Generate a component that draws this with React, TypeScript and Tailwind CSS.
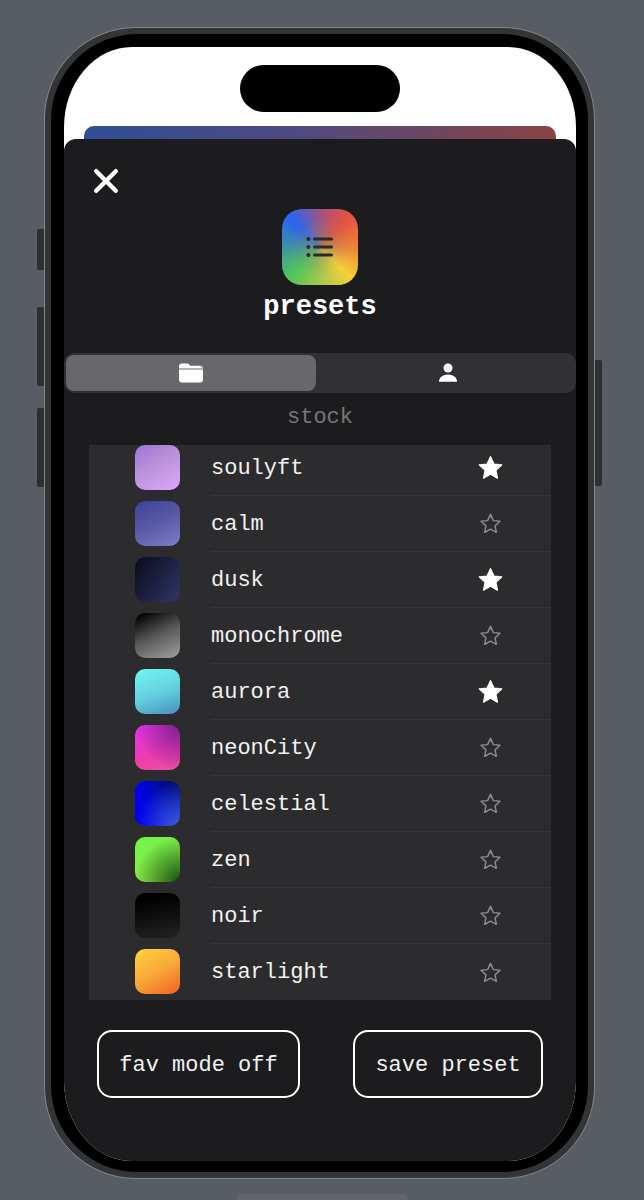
const rows: { name: string; fav: boolean; grad: string }[] = [
  { name: "soulyft", fav: true, grad: "bg-[linear-gradient(150deg,#9f72d6_0%,#b88fd8_40%,#dba9fb_100%)]" },
  { name: "calm", fav: false, grad: "bg-[linear-gradient(155deg,#3f3f98_0%,#5a5aa8_50%,#7e7ec4_100%)]" },
  { name: "dusk", fav: true, grad: "bg-[linear-gradient(125deg,#0b0b1c_0%,#1d2040_50%,#323668_100%)]" },
  { name: "monochrome", fav: false, grad: "bg-[linear-gradient(155deg,#000000_5%,#5a5a5a_50%,#a0a0a0_100%)]" },
  { name: "aurora", fav: true, grad: "bg-[linear-gradient(160deg,#72f6f2_0%,#62cfdc_55%,#4a8dbf_100%)]" },
  { name: "neonCity", fav: false, grad: "bg-[radial-gradient(circle_at_100%_0%,#7c1f8a_0%,#7c1f8a00_70%),linear-gradient(170deg,#e232ee_0%,#ee3ea8_70%,#ea50a8_100%)]" },
  { name: "celestial", fav: false, grad: "bg-[radial-gradient(circle_at_100%_100%,#3d62dc_0%,#3d62dc00_70%),radial-gradient(circle_at_100%_0%,#001260_0%,#00126000_70%),linear-gradient(135deg,#0000f5_0%,#0000d8_100%)]" },
  { name: "zen", fav: false, grad: "bg-[radial-gradient(circle_at_100%_100%,#14500f_0%,#14500f00_72%),linear-gradient(160deg,#70f448_0%,#94e84a_100%)]" },
  { name: "noir", fav: false, grad: "bg-[linear-gradient(170deg,#000000_15%,#232323_100%)]" },
  { name: "starlight", fav: false, grad: "bg-[linear-gradient(150deg,#ffd23f_0%,#f8a83a_50%,#ef6124_100%)]" },
];

const STAR = "12,1.6 15.3,8.7 22.8,9.5 17.2,14.7 18.7,22.2 12,18.5 5.3,22.2 6.8,14.7 1.2,9.5 8.7,8.7";

function Star({ fav }: { fav: boolean }) {
  return fav ? (
    <svg width="25" height="25" viewBox="0 0 24 24">
      <polygon points={STAR} fill="#ffffff" stroke="#ffffff" strokeWidth="1.2" strokeLinejoin="round" />
    </svg>
  ) : (
    <svg width="21" height="21" viewBox="0 0 24 24">
      <polygon points={STAR} fill="none" stroke="#8e8e93" strokeWidth="1.6" strokeLinejoin="round" />
    </svg>
  );
}

export default function App() {
  return (
    <div className="relative h-[1200px] w-[644px] overflow-hidden bg-[#585d64] pl-[44px] pt-[27px] font-['Liberation_Mono','DejaVu_Sans_Mono',monospace]">
      {/* side buttons */}
      <div className="absolute left-[37px] top-[229px] h-[41px] w-[7px] rounded-l-[2px] bg-[#2e2f31]" />
      <div className="absolute left-[37px] top-[307px] h-[79px] w-[7px] rounded-l-[2px] bg-[#2e2f31]" />
      <div className="absolute left-[37px] top-[408px] h-[79px] w-[7px] rounded-l-[2px] bg-[#2e2f31]" />
      <div className="absolute left-[595px] top-[360px] h-[126px] w-[7px] rounded-r-[2px] bg-[#2e2f31]" />
      <div className="absolute left-[236px] top-[1194px] h-[6px] w-[172px] rounded-t-[6px] bg-[#62666c]" />

      {/* phone */}
      <div className="h-[1152px] w-[551px] rounded-[92px] border border-[#85878a] bg-[#333436] p-[6px]">
        <div className="h-full w-full rounded-[86px] bg-black px-[13px] pb-[11px] pt-[13px]">
          <div className="relative flex h-[1114px] w-[512px] flex-col overflow-hidden rounded-[68px/80px] bg-white">
            <div className="absolute left-[176px] top-[18px] h-[47px] w-[160px] rounded-full bg-black" />
            <div className="mx-[20px] mt-[79px] h-[20px] shrink-0 rounded-t-[10px] bg-[linear-gradient(90deg,#2f4e97_0%,#4f4a80_45%,#8a4343_100%)]" />
            <div className="-mt-[7px] flex flex-1 flex-col rounded-t-[12px] bg-[#1c1c1e]">
              <div className="pl-[29px] pt-[29px]">
                <svg width="26" height="26" viewBox="0 0 26 26" className="block">
                  <path d="M3.2 3.2 L22.8 22.8 M22.8 3.2 L3.2 22.8" stroke="#ffffff" strokeWidth="4.4" strokeLinecap="round" />
                </svg>
              </div>
              <div className="mt-[15px] flex flex-col items-center">
                <div className="flex h-[76px] w-[76px] items-center justify-center rounded-[20px] bg-[radial-gradient(circle,#8c8a6c99_0%,#8c8a6c00_55%),conic-gradient(from_-45deg_at_50%_50%,#2b64ee_0%,#a9527a_14%,#e5533f_25%,#ec8638_38%,#f6d038_50%,#a8c84c_62%,#52c45c_75%,#3c90a8_88%,#2b64ee_100%)]">
                  <svg width="28" height="22" viewBox="0 0 28 22">
                    <g fill="#2b2b2b">
                      <circle cx="2.4" cy="3" r="2" />
                      <circle cx="2.4" cy="11" r="2" />
                      <circle cx="2.4" cy="19" r="2" />
                      <rect x="7" y="1.5" width="20" height="3" rx="1.5" />
                      <rect x="7" y="9.5" width="20" height="3" rx="1.5" />
                      <rect x="7" y="17.5" width="20" height="3" rx="1.5" />
                    </g>
                  </svg>
                </div>
                <div className="mt-[3px] text-[27px] font-bold leading-[38px] text-white">presets</div>
              </div>

              <div className="mt-[27px] flex h-[40px] rounded-[10px] bg-[#303035] p-[2px]">
                <div className="flex w-[250px] items-center justify-center rounded-[8px] bg-[#68686c]">
                  <svg width="26" height="20" viewBox="0 0 26 20">
                    <path fill="#ffffff" d="M1 5.4 V3.6 A3 3 0 0 1 4 .6 H8.6 C10 .6 10.6 1 11.4 1.8 L12.4 2.8 H22 A3 3 0 0 1 25 5.4 Z" />
                    <path fill="#ffffff" d="M1 6.4 H25 V16.4 A3 3 0 0 1 22 19.4 H4 A3 3 0 0 1 1 16.4 Z" />
                  </svg>
                </div>
                <div className="flex flex-1 items-center justify-center pl-[6px]">
                  <svg width="20" height="20" viewBox="0 0 20 20">
                    <circle cx="10" cy="5" r="4.5" fill="#ffffff" />
                    <path fill="#ffffff" d="M1 18.8 C0.8 14.4 5 11.4 10 11.4 C15 11.4 19.2 14.4 19 18.8 Z" />
                  </svg>
                </div>
              </div>

              <div className="mt-[11px] text-center text-[22px] leading-[28px] text-[#77777b]">stock</div>

              <div className="mx-[25px] mt-[13px] h-[555px] overflow-hidden bg-[#2c2c2e]">
                <div className="-mt-[5px]">
                  {rows.map((r, i) => (
                    <div key={r.name} className="flex h-[56px] items-center pl-[46px]">
                      <div className={`mb-[2px] h-[45px] w-[45px] shrink-0 rounded-[10px] ${r.grad}`} />
                      <div className={`ml-[31px] flex h-full flex-1 items-center ${i < rows.length - 1 ? "border-b border-[#363638]" : ""}`}>
                        <div className="flex-1 pt-[2px] text-[22px] leading-[28px] text-[#f2f2f2]">{r.name}</div>
                        <div className="mr-[47px] flex w-[28px] items-center justify-center">
                          <Star fav={r.fav} />
                        </div>
                      </div>
                    </div>
                  ))}
                </div>
              </div>

              <div className="mt-[30px] flex items-start pl-[33px]">
                <div className="flex h-[68px] w-[203px] items-center justify-center rounded-[15px] border-[2.5px] border-white pt-[2px] text-[22px] text-[#f2f2f2]">fav mode off</div>
                <div className="ml-[53px] flex h-[68px] w-[190px] items-center justify-center rounded-[15px] border-[2.5px] border-white pt-[2px] text-[22px] text-[#f2f2f2]">save preset</div>
              </div>
            </div>
          </div>
        </div>
      </div>
    </div>
  );
}
